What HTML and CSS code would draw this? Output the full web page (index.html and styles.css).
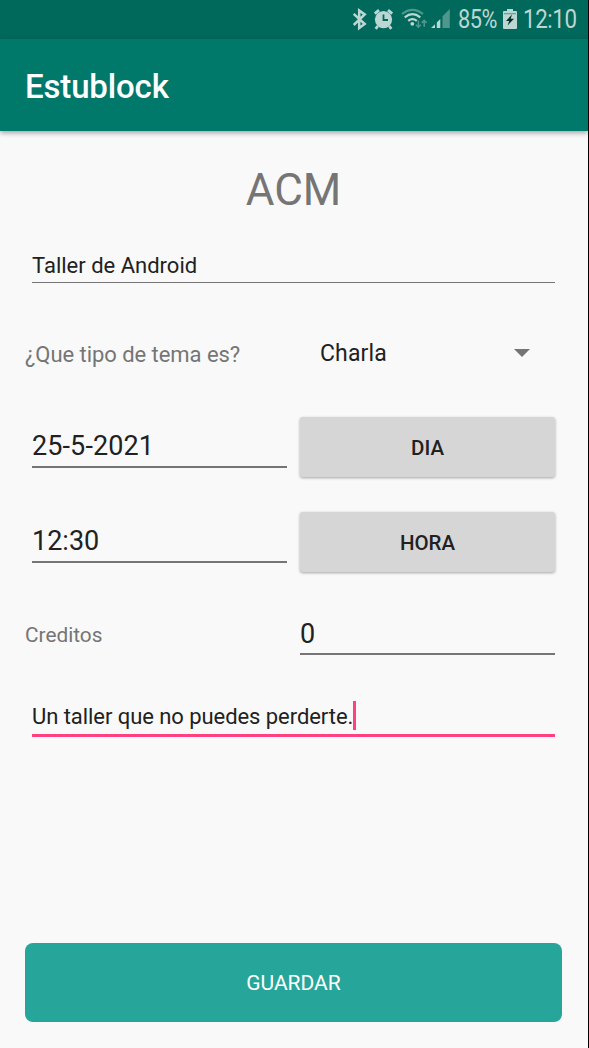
FILE: index.html
```html
<!DOCTYPE html>
<html lang="es">
<head>
<meta charset="utf-8">
<title>Estublock</title>
<link rel="stylesheet" href="styles.css">
</head>
<body>
<div class="screen">
  <div class="status">
    <svg class="status-icons" width="112" height="39" viewBox="0 0 112 39">
      <path class="bt" d="M3.7 13.8 L14.7 24 L9.2 28 V10.5 L14.7 14.5 L3.7 25"/>
      <g transform="translate(-10 0)">
        <circle class="on" cx="43.5" cy="19.6" r="8.6"/>
        <path class="stroke-on" d="M34.8 13.6 L39 10.2 M52.2 13.6 L48 10.2 M37.8 26 L35.7 28.8 M49.2 26 L51.3 28.8"/>
        <path class="clock-hands" d="M43.5 14.5 V20 H48"/>
        <path class="wifi dim" d="M62 14 Q72.5 5.6 83 14"/>
        <path class="wifi" d="M64.7 17.3 Q72.5 11 80.3 17.3 M68.2 20.8 Q72.5 17.3 76.8 20.8"/>
        <circle class="on" cx="72.3" cy="23.8" r="1.9"/>
        <path class="arrows" d="M78.4 20.5 V27 M76 24.7 L78.4 27.2 L80.8 24.7 M84.2 26.7 V20.5 M81.8 22.9 L84.2 20.4 L86.6 22.9"/>
        <path class="on" d="M91 28 L95 24.3 V28 Z M96.8 28 V22.4 L100.3 19 V28 Z"/>
        <path class="off" d="M102.5 28 V16.3 L109.8 9 V28 Z"/>
      </g>
    </svg>
    <span class="percent">85%</span>
    <svg class="battery" width="14" height="21" viewBox="0 0 14 21">
      <path class="on" d="M4 0 H10 V2 H13 Q14 2 14 3 V19 Q14 20 13 20 H1 Q0 20 0 19 V3 Q0 2 1 2 H4 Z"/>
      <path class="battery-level" d="M1 4.7 H13"/>
      <path class="bolt" d="M9 5.5 L3 12 H6.2 L4.6 16.5 L11 9.8 H7.7 Z"/>
    </svg>
    <span class="clock">12:10</span>
  </div>
  <header class="appbar"><span class="brand">Estublock</span></header>
  <main class="form">
    <h1 class="title"><span>ACM</span></h1>
    <div class="field name"><span class="small-value">Taller de Android</span></div>
    <div class="row type">
      <span class="label question">¿Que tipo de tema es?</span>
      <div class="spinner"><span class="choice">Charla</span><svg class="caret-icon" width="16" height="8" viewBox="0 0 16 8"><path class="caret" d="M0 0 H16 L8 8 Z"/></svg></div>
    </div>
    <div class="row picker">
      <div class="field"><span class="value date">25-5-2021</span></div>
      <button class="pick"><span class="dia">DIA</span></button>
    </div>
    <div class="row picker">
      <div class="field"><span class="value">12:30</span></div>
      <button class="pick"><span class="hora">HORA</span></button>
    </div>
    <div class="row credits">
      <span class="label credit-label">Creditos</span>
      <div class="field"><span class="value">0</span></div>
    </div>
    <div class="field description"><span class="small-value desc-text">Un taller que no puedes perderte.</span><i class="cursor"></i></div>
    <button class="save"><span class="save-text">GUARDAR</span></button>
  </main>
</div>
</body>
</html>
```
FILE: styles.css
```css
* { box-sizing: border-box; }
body { margin: 0; font-family: Roboto, "Noto Sans", sans-serif; }
button { border: 0; padding: 0; font-family: inherit; }
span { white-space: nowrap; }
svg { display: block; flex: none; }

.screen { width: 589px; height: 1048px; display: flex; flex-direction: column; background: #f9f9f9; border-right: 1px solid #000; overflow: hidden; }

.status { height: 39px; flex: none; display: flex; align-items: center; padding-left: 350px; background: #00695c; color: #bcd7d3; font-size: 25px; line-height: 41px; }
.percent { width: 39px; margin-left: -4px; transform: scaleX(0.87); transform-origin: left; letter-spacing: -0.6px; }
.battery { margin-left: 6px; }
.clock { margin-left: 5.5px; transform: scaleX(0.89); transform-origin: left; letter-spacing: -0.4px; }
.on { fill: #bcd7d3; }
.off { fill: #4e978d; }
.bt { fill: none; stroke: #bcd7d3; stroke-width: 2.5; }
.stroke-on { fill: none; stroke: #bcd7d3; stroke-width: 2.8; }
.clock-hands { fill: none; stroke: #00695c; stroke-width: 1.8; }
.wifi { fill: none; stroke: #bcd7d3; stroke-width: 2.2; }
.wifi.dim { stroke: #4e978d; }
.arrows { fill: none; stroke: #4e978d; stroke-width: 1.6; }
.battery-level { fill: none; stroke: #5da096; stroke-width: 1.2; }
.bolt { fill: #002f29; }

.appbar { height: 92px; flex: none; display: flex; align-items: center; padding: 3px 0 0 25px; background: #00796b; color: #fff; box-shadow: 0 2px 5px rgba(0, 0, 0, 0.35); }
.brand { font-size: 33px; font-weight: 500; letter-spacing: -0.15px; }

.form { flex: 1; display: flex; flex-direction: column; padding: 0 26px 26px 25px; }
.title { height: 108px; margin: 0; padding-top: 9px; display: flex; justify-content: center; align-items: center; color: #757575; font-size: 44px; font-weight: 400; }

.field { display: flex; color: #212121; border-bottom: 2px solid #757575; margin: 0 7px; }
.small-value { font-size: 22px; line-height: 28px; }
.value { font-size: 27px; line-height: 34px; }
.date { letter-spacing: 0.1px; }
.name { height: 44px; padding-top: 13px; border-bottom-width: 1.5px; }

.row { display: grid; grid-template-columns: 269px 268px; align-items: start; }
.label { color: #757575; font-size: 22px; line-height: 28px; }
.question { letter-spacing: -0.05px; padding-top: 1px; }
.type { height: 134px; padding-top: 57px; }
.spinner { display: flex; align-items: center; justify-content: space-between; padding: 0 32px 0 26px; height: 28px; color: #212121; }
.choice { font-size: 23px; line-height: 28px; letter-spacing: 0.15px; }
.caret-icon { margin-bottom: 2px; }
.caret { fill: #757575; }

.picker { height: 95px; }
.picker .field { height: 51px; padding-top: 12px; }
.pick { margin: 0 7px 0 6px; height: 60px; padding-top: 2px; border-radius: 3px; background: #d6d6d6; color: #212121; font-size: 20.5px; font-weight: 500; box-shadow: 0 1px 3px rgba(0, 0, 0, 0.35); }

.credits { height: 81px; padding-top: 9px; }
.credit-label { font-size: 20.8px; padding-top: 5px; }
.credits .field { height: 39px; margin-left: 6px; }
.credits .value { padding-top: 1px; }

.description { height: 49px; padding-top: 15px; border-bottom: 3px solid #ff4081; }
.desc-text { letter-spacing: -0.06px; }
.cursor { width: 3px; height: 29px; margin-top: -2px; background: #ff4081; }

.save { height: 79px; flex: none; margin-top: auto; padding-top: 1px; border-radius: 8px; background: #26a69a; color: #fff; font-size: 21px; }
```
